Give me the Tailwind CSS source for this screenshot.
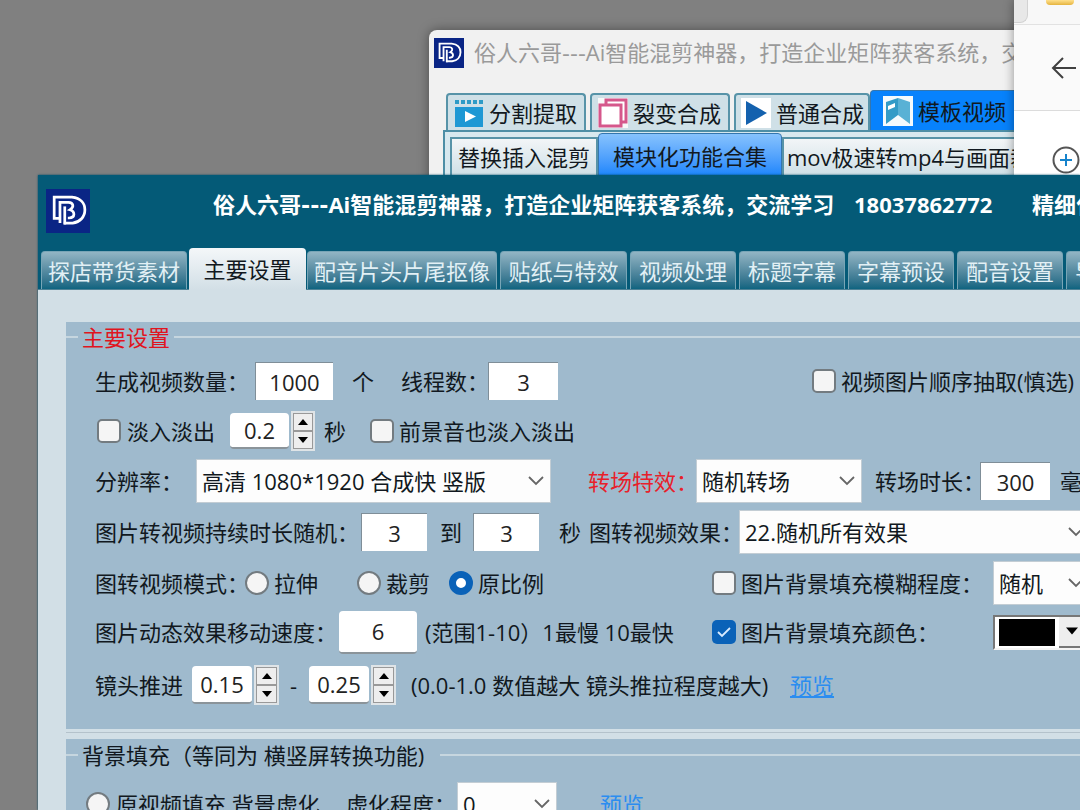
<!DOCTYPE html>
<html lang="zh-CN">
<head>
<meta charset="utf-8">
<meta name="viewport" content="width=device-width, initial-scale=1">
<title>俗人六哥---Ai智能混剪神器</title>
<script src="https://cdn.jsdelivr.net/npm/@tailwindcss/browser@4"></script>
</head>
<body class="h-screen overflow-hidden bg-[#808080] font-['Open_Sans','Noto_Sans_CJK_SC',sans-serif] text-[22px] leading-[30px] text-[#111820]">
<svg class="hidden">
  <symbol id="logo" viewBox="6 6 129 129">
    <rect x="6" y="6" width="129" height="129" fill="#0a2585"/>
    <g fill="none" stroke="#fff" stroke-width="8">
      <path d="M45 92H30V30H82C108 33 120 48 120 67C120 88 106 103 84 106H58"/>
      <path d="M47 106V45H72C86 46 90 58 76 67C92 72 92 90 74 91H70"/>
      <path d="M61 57V110"/>
    </g>
  </symbol>
  <symbol id="chev" viewBox="0 0 18 12"><path d="M2 2l7 7 7-7" fill="none" stroke="#666" stroke-width="1.8"/></symbol>
  <symbol id="up" viewBox="0 0 10 6"><path d="M0 6L5 0l5 6z"/></symbol>
  <symbol id="down" viewBox="0 0 10 6"><path d="M0 0h10L5 6z"/></symbol>
</svg>
<div class="relative h-full w-full overflow-hidden whitespace-nowrap">

  <!-- Background application window -->
  <section class="absolute left-[429px] right-0 top-[30px] h-[200px] overflow-hidden rounded-t-lg bg-[#f1f1f1] shadow-[0_0_12px_#0006]">
    <header class="flex h-[46px] items-center gap-[10px] pl-[5px]">
      <svg class="size-[30px] shrink-0"><use href="#logo"/></svg>
      <h2 class="text-[#9a9a9a]">俗人六哥<span class="font-['DejaVu_Sans']">---</span>Ai智能混剪神器，打造企业矩阵获客系统，交流学习</h2>
    </header>
    <nav class="mt-[14px] flex h-10 items-end gap-1 pl-[17px]">
      <button class="flex h-[37px] w-[140px] shrink-0 items-center gap-[6px] rounded-t border-2 border-b-0 border-[#5793a8] bg-[#cfe0e7] pl-[7px]">
        <svg class="size-7 shrink-0" viewBox="0 0 28 28"><path d="M0 8h28v20H0z" fill="#1e98d4"/><path d="M0 3h28" stroke="#2d9bc7" stroke-width="4" stroke-dasharray="4 2"/><path d="M10 12v11l11-5.500z" fill="#fff"/></svg>分割提取</button>
      <button class="flex h-[37px] w-[140px] shrink-0 items-center gap-[5px] rounded-t border-2 border-b-0 border-[#5793a8] bg-[#cfe0e7] pl-[6px]">
        <svg class="size-[30px] shrink-0" viewBox="0 0 30 30"><path d="M0 0h30v30H0z" fill="#f8f8f8"/><g fill="#fff" stroke="#d5578b" stroke-width="3"><rect x="8" y="2" width="20" height="22"/><rect x="2" y="7" width="21" height="21"/></g></svg>裂变合成</button>
      <button class="flex h-[37px] w-[136px] shrink-0 items-center gap-[5px] rounded-t border-2 border-b-0 border-[#5793a8] bg-[#cfe0e7] pl-[5px]">
        <svg class="size-[30px] shrink-0" viewBox="0 0 30 30"><path d="M0 0h30v30H0z" fill="#fff"/><path d="M5 3v24l21-12z" fill="#1461ae"/></svg>普通合成</button>
      <button class="-ml-1 flex h-10 w-[170px] shrink-0 items-center gap-[5px] rounded-t border border-b-0 border-[#3476ae] bg-[#0782fc] pl-3">
        <svg class="size-[30px] shrink-0" viewBox="0 0 30 30"><path d="M0 0h30v30H0z" fill="#f4fafd"/><path d="M3 6l12-4v17L3 28z" fill="#339bc7"/><path d="M15 2l12 4v22l-12-9z" fill="#59b1d5"/><path d="M5 10l7-3v4l-7 3z" fill="#fff"/></svg>模板视频</button>
    </nav>
    <nav class="ml-[14px] flex h-[60px] items-start border-2 border-[#4d8ea6] bg-[#d7e8ef] pl-[5px]">
      <button class="mt-[5px] h-10 w-[148px] shrink-0 border-2 border-[#5793a8] bg-gradient-to-b from-[#f2f5f7] to-[#cfe0e7]">替换插入混剪</button>
      <button class="mt-px h-[46px] w-[184px] shrink-0 rounded-t border border-[#3476ae] bg-gradient-to-b from-[#86c2fd] to-[#0a82fb]">模块化功能合集</button>
      <button class="mt-[5px] h-10 shrink-0 border-2 border-[#5793a8] bg-gradient-to-b from-[#f2f5f7] to-[#cfe0e7] px-[3px]">mov极速转mp4与画面裁剪</button>
    </nav>
  </section>

  <!-- Browser window in the corner -->
  <section class="absolute left-[1014px] right-0 top-0 h-[200px] bg-white shadow-[0_0_10px_#0006]">
    <div class="flex h-[25px] items-start border-b border-[#e2e2e2] bg-[#f8f8f8]">
      <span class="h-[23px] w-[14px] rounded-br-lg border-b border-r border-[#d2d2d2] bg-[#e8e8e8]"></span>
      <span class="ml-[18px] h-[5px] w-7 rounded-b bg-gradient-to-b from-[#ffe08a] to-[#e5b43c]"></span>
    </div>
    <div class="flex h-[86px] items-center border-b border-[#dcdcdc] bg-[#fafafa] pl-[37px]">
      <button aria-label="返回"><svg class="h-6 w-[26px]" viewBox="0 0 26 24" fill="none" stroke="#404040" stroke-width="2"><path d="M25 12H2M12 2L2 12l10 10"/></svg></button>
    </div>
    <button aria-label="新增" class="ml-[37px] mt-[34px] block"><svg class="size-[30px]" viewBox="0 0 30 30" fill="none"><circle cx="15" cy="15" r="12.500" stroke="#555" stroke-width="2"/><path d="M15 9v12M9 15h12" stroke="#1683cc" stroke-width="2"/></svg></button>
  </section>

  <!-- Main settings window -->
  <main class="absolute bottom-0 left-[38px] right-0 top-[175px] overflow-hidden bg-[#d2dfe6] shadow-[0_0_2px_#024a63]">
    <div class="bg-[#045a77]">
      <header class="flex h-[73px] items-start pl-2 pt-[14px] font-bold text-white">
        <svg class="size-11 shrink-0"><use href="#logo"/></svg>
        <h1 class="ml-[123px] flex">
          <span class="w-[641px] shrink-0">俗人六哥<span class="font-['DejaVu_Sans']">---</span>Ai智能混剪神器，打造企业矩阵获客系统，交流学习</span>
          <span class="w-[178px] shrink-0">18037862772</span>
          <span>精细化</span>
        </h1>
      </header>
      <nav class="flex h-[42px] items-end gap-[3px] border-b border-[#4f8296] pl-[3px] text-[#e2f0f5]">
        <button class="h-[38px] w-[146px] shrink-0 rounded-t border border-b-0 border-[#78a5b6] bg-gradient-to-b from-[#92b5c4] to-[#0d6480]">探店带货素材</button>
        <button class="-ml-px -mb-px h-[42px] w-[117px] shrink-0 rounded-t bg-gradient-to-b from-[#f4f7f9] to-[#d2dfe6] text-[#111820]">主要设置</button>
        <button class="-ml-[2px] h-[38px] w-[190px] shrink-0 rounded-t border border-b-0 border-[#78a5b6] bg-gradient-to-b from-[#92b5c4] to-[#0d6480]">配音片头片尾抠像</button>
        <button class="h-[38px] w-[127px] shrink-0 rounded-t border border-b-0 border-[#78a5b6] bg-gradient-to-b from-[#92b5c4] to-[#0d6480]">贴纸与特效</button>
        <button class="h-[38px] w-[106px] shrink-0 rounded-t border border-b-0 border-[#78a5b6] bg-gradient-to-b from-[#92b5c4] to-[#0d6480]">视频处理</button>
        <button class="h-[38px] w-[106px] shrink-0 rounded-t border border-b-0 border-[#78a5b6] bg-gradient-to-b from-[#92b5c4] to-[#0d6480]">标题字幕</button>
        <button class="h-[38px] w-[106px] shrink-0 rounded-t border border-b-0 border-[#78a5b6] bg-gradient-to-b from-[#92b5c4] to-[#0d6480]">字幕预设</button>
        <button class="h-[38px] w-[106px] shrink-0 rounded-t border border-b-0 border-[#78a5b6] bg-gradient-to-b from-[#92b5c4] to-[#0d6480]">配音设置</button>
        <button class="h-[38px] w-[106px] shrink-0 rounded-t border border-b-0 border-[#78a5b6] bg-gradient-to-b from-[#92b5c4] to-[#0d6480]">导出设置</button>
      </nav>
    </div>

    <form class="pl-7 pt-8">
      <fieldset class="h-[407px] min-w-0 bg-[#9fbacd]">
        <legend class="float-left flex h-[30px] w-full items-center gap-1 text-[#e01420]">
          <span class="h-[2px] w-3 bg-[#c6d6df]"></span>主要设置<span class="h-[2px] flex-1 bg-[#c6d6df]"></span>
        </legend>
        <div class="clear-both pl-[29px] pt-1">
          <div class="grid h-[50px] grid-cols-[160px_97px_49px_87px_324px_auto] items-center">
            <label for="count">生成视频数量：</label>
            <input id="count" value="1000" class="h-[38px] w-[78px] border-l border-t border-[#7f8e98] bg-white text-center text-[#222]">
            <span>个</span>
            <label for="threads">线程数：</label>
            <input id="threads" value="3" class="h-[38px] w-[70px] border-l border-t border-[#7f8e98] bg-white text-center text-[#222]">
            <label class="flex items-center gap-[5px]"><input type="checkbox" class="size-6 shrink-0 appearance-none rounded-[5px] border-2 border-[#737b80] bg-[#f5f5f5]">视频图片顺序抽取(慎选)</label>
          </div>
          <div class="grid h-[50px] grid-cols-[135px_94px_46px_auto] items-center">
            <label class="flex items-center gap-[6px] pl-[2px]"><input type="checkbox" class="size-6 shrink-0 appearance-none rounded-[5px] border-2 border-[#737b80] bg-[#f5f5f5]">淡入淡出</label>
            <div class="flex items-center">
              <input aria-label="淡入淡出秒数" value="0.2" class="h-9 w-[59px] rounded-sm border-b-2 border-[#8b949a] bg-white text-center text-[#222]">
              <span class="ml-[2px] flex flex-col border-2 border-[#dfe4e7] bg-[#d0d0d0]">
                <button type="button" aria-label="增加" class="flex h-[18px] w-5 items-center justify-center border border-[#999] bg-[#eee]"><svg class="h-[6px] w-[10px]"><use href="#up"/></svg></button>
                <button type="button" aria-label="减少" class="flex h-[18px] w-5 items-center justify-center border border-[#999] bg-[#eee]"><svg class="h-[6px] w-[10px]"><use href="#down"/></svg></button>
              </span>
            </div>
            <span>秒</span>
            <label class="flex items-center gap-[5px]"><input type="checkbox" class="size-6 shrink-0 appearance-none rounded-[5px] border-2 border-[#737b80] bg-[#f5f5f5]">前景音也淡入淡出</label>
          </div>
          <div class="grid h-[50px] grid-cols-[101px_392px_108px_179px_105px_80px_auto] items-center">
            <label for="res">分辨率：</label>
            <div class="relative w-[355px]">
              <select id="res" class="h-11 w-full appearance-none border border-[#c3cdd4] bg-[#fdfdfd] pl-[5px]"><option>高清 1080*1920 合成快 竖版</option></select>
              <svg class="pointer-events-none absolute right-[6px] top-4 h-3 w-[18px]"><use href="#chev"/></svg>
            </div>
            <label for="trans" class="text-[#e8202a]">转场特效：</label>
            <div class="relative w-[166px]">
              <select id="trans" class="h-11 w-full appearance-none border border-[#c3cdd4] bg-[#fdfdfd] pl-[5px]"><option>随机转场</option></select>
              <svg class="pointer-events-none absolute right-[6px] top-4 h-3 w-[18px]"><use href="#chev"/></svg>
            </div>
            <label for="dur">转场时长：</label>
            <input id="dur" value="300" class="h-[38px] w-[70px] border-l border-t border-[#7f8e98] bg-white text-center text-[#222]">
            <span>毫秒</span>
          </div>
          <div class="grid h-[52px] grid-cols-[266px_79px_33px_86px_30px_150px_auto] items-center">
            <label for="from">图片转视频持续时长随机：</label>
            <input id="from" value="3" class="h-[38px] w-[66px] border-l border-t border-[#7f8e98] bg-white text-center text-[#222]">
            <label for="to">到</label>
            <input id="to" value="3" class="h-[38px] w-[66px] border-l border-t border-[#7f8e98] bg-white text-center text-[#222]">
            <span>秒</span>
            <label for="effect">图转视频效果：</label>
            <div class="relative w-[354px]">
              <select id="effect" class="h-11 w-full appearance-none border border-[#c3cdd4] bg-[#fdfdfd] pl-[5px]"><option>22.随机所有效果</option></select>
              <svg class="pointer-events-none absolute right-2 top-4 h-3 w-[18px]"><use href="#chev"/></svg>
            </div>
          </div>
          <div class="grid h-[50px] grid-cols-[150px_112px_92px_263px_281px_auto] items-center">
            <span>图转视频模式：</span>
            <label class="flex items-center gap-[5px]"><input type="radio" name="mode" class="size-6 shrink-0 appearance-none rounded-full border-2 border-[#737b80] bg-[#f5f5f5]">拉伸</label>
            <label class="flex items-center gap-[5px]"><input type="radio" name="mode" class="size-6 shrink-0 appearance-none rounded-full border-2 border-[#737b80] bg-[#f5f5f5]">裁剪</label>
            <label class="flex items-center gap-[5px]"><input type="radio" name="mode" checked class="size-6 shrink-0 appearance-none rounded-full border-[7px] border-[#0a62b8] bg-white">原比例</label>
            <label class="flex items-center gap-[5px]"><input type="checkbox" class="size-6 shrink-0 appearance-none rounded-[5px] border-2 border-[#737b80] bg-[#f5f5f5]">图片背景填充模糊程度：</label>
            <div class="relative w-[100px]">
              <select aria-label="模糊程度" class="h-11 w-full appearance-none border border-[#c3cdd4] bg-[#fdfdfd] pl-[5px]"><option>随机</option></select>
              <svg class="pointer-events-none absolute right-2 top-4 h-3 w-[18px]"><use href="#chev"/></svg>
            </div>
          </div>
          <div class="grid h-[48px] grid-cols-[244px_86px_287px_281px_auto] items-center">
            <label for="speed">图片动态效果移动速度：</label>
            <input id="speed" value="6" class="h-[43px] w-[78px] rounded-sm border-b-2 border-[#8b949a] bg-white text-center text-[#222]">
            <span>(范围1-10）1最慢 10最快</span>
            <label class="flex items-center gap-[5px]">
              <span class="grid shrink-0">
                <input type="checkbox" checked class="col-start-1 row-start-1 size-6 appearance-none rounded-[5px] bg-[#0a62b8]">
                <svg class="pointer-events-none col-start-1 row-start-1 size-6" viewBox="0 0 24 24" fill="none" stroke="#d8ebff" stroke-width="1.800"><path d="M6 12l4 4 8-8"/></svg>
              </span>图片背景填充颜色：</label>
            <button type="button" aria-label="填充颜色" class="flex h-[35px] w-[96px] border-2 border-b-[#f4f4f4] border-l-[#777] border-r-[#f4f4f4] border-t-[#777] bg-white">
              <span class="m-[2px] ml-1 h-[27px] w-14 bg-black"></span>
              <span class="ml-[2px] flex h-full flex-1 items-center justify-center border-b-2 border-r-2 border-[#777] bg-[#eee]"><svg class="h-2 w-3"><use href="#down"/></svg></span>
            </button>
          </div>
          <div class="grid h-[58px] grid-cols-[97px_98px_19px_102px_379px_auto] items-center">
            <span>镜头推进</span>
            <div class="flex items-center">
              <input aria-label="镜头推进最小值" value="0.15" class="h-[38px] w-[60px] rounded-sm border-b-2 border-[#8b949a] bg-white text-center text-[#222]">
              <span class="ml-[2px] flex flex-col border-2 border-[#dfe4e7] bg-[#d0d0d0]">
                <button type="button" aria-label="增加" class="flex h-[18px] w-[21px] items-center justify-center border border-[#999] bg-[#eee]"><svg class="h-[6px] w-[10px]"><use href="#up"/></svg></button>
                <button type="button" aria-label="减少" class="flex h-[18px] w-[21px] items-center justify-center border border-[#999] bg-[#eee]"><svg class="h-[6px] w-[10px]"><use href="#down"/></svg></button>
              </span>
            </div>
            <span>-</span>
            <div class="flex items-center">
              <input aria-label="镜头推进最大值" value="0.25" class="h-[38px] w-[60px] rounded-sm border-b-2 border-[#8b949a] bg-white text-center text-[#222]">
              <span class="ml-[2px] flex flex-col border-2 border-[#dfe4e7] bg-[#d0d0d0]">
                <button type="button" aria-label="增加" class="flex h-[18px] w-[21px] items-center justify-center border border-[#999] bg-[#eee]"><svg class="h-[6px] w-[10px]"><use href="#up"/></svg></button>
                <button type="button" aria-label="减少" class="flex h-[18px] w-[21px] items-center justify-center border border-[#999] bg-[#eee]"><svg class="h-[6px] w-[10px]"><use href="#down"/></svg></button>
              </span>
            </div>
            <span>(0.0-1.0 数值越大 镜头推拉程度越大)</span>
            <a href="#preview" class="text-[#2b8df0] underline">预览</a>
          </div>
        </div>
      </fieldset>
      <div class="mt-[3px] h-px bg-[#b4c2cb]"></div>
      <fieldset class="mt-[6px] min-w-0 bg-[#9fbacd]">
        <legend class="float-left flex h-8 w-full items-center gap-1">
          <span class="h-[2px] w-3 bg-[#c6d6df]"></span>背景填充（等同为 横竖屏转换功能)<span class="ml-3 h-[2px] flex-1 bg-[#c6d6df]"></span>
        </legend>
        <div class="clear-both grid h-[66px] grid-cols-[260px_111px_143px_auto] items-center pl-5">
          <label class="flex items-center gap-[6px]"><input type="radio" name="fill" class="size-6 shrink-0 appearance-none rounded-full border-2 border-[#737b80] bg-[#f5f5f5]">原视频填充 背景虚化</label>
          <label for="blur">虚化程度：</label>
          <div class="relative w-[100px]">
            <select id="blur" class="h-11 w-full appearance-none border border-[#c3cdd4] bg-[#fdfdfd] pl-[5px]"><option>0</option></select>
            <svg class="pointer-events-none absolute right-[6px] top-4 h-3 w-[18px]"><use href="#chev"/></svg>
          </div>
          <a href="#preview2" class="text-[#2b8df0] underline">预览</a>
        </div>
      </fieldset>
    </form>
  </main>
</div>
</body>
</html>
